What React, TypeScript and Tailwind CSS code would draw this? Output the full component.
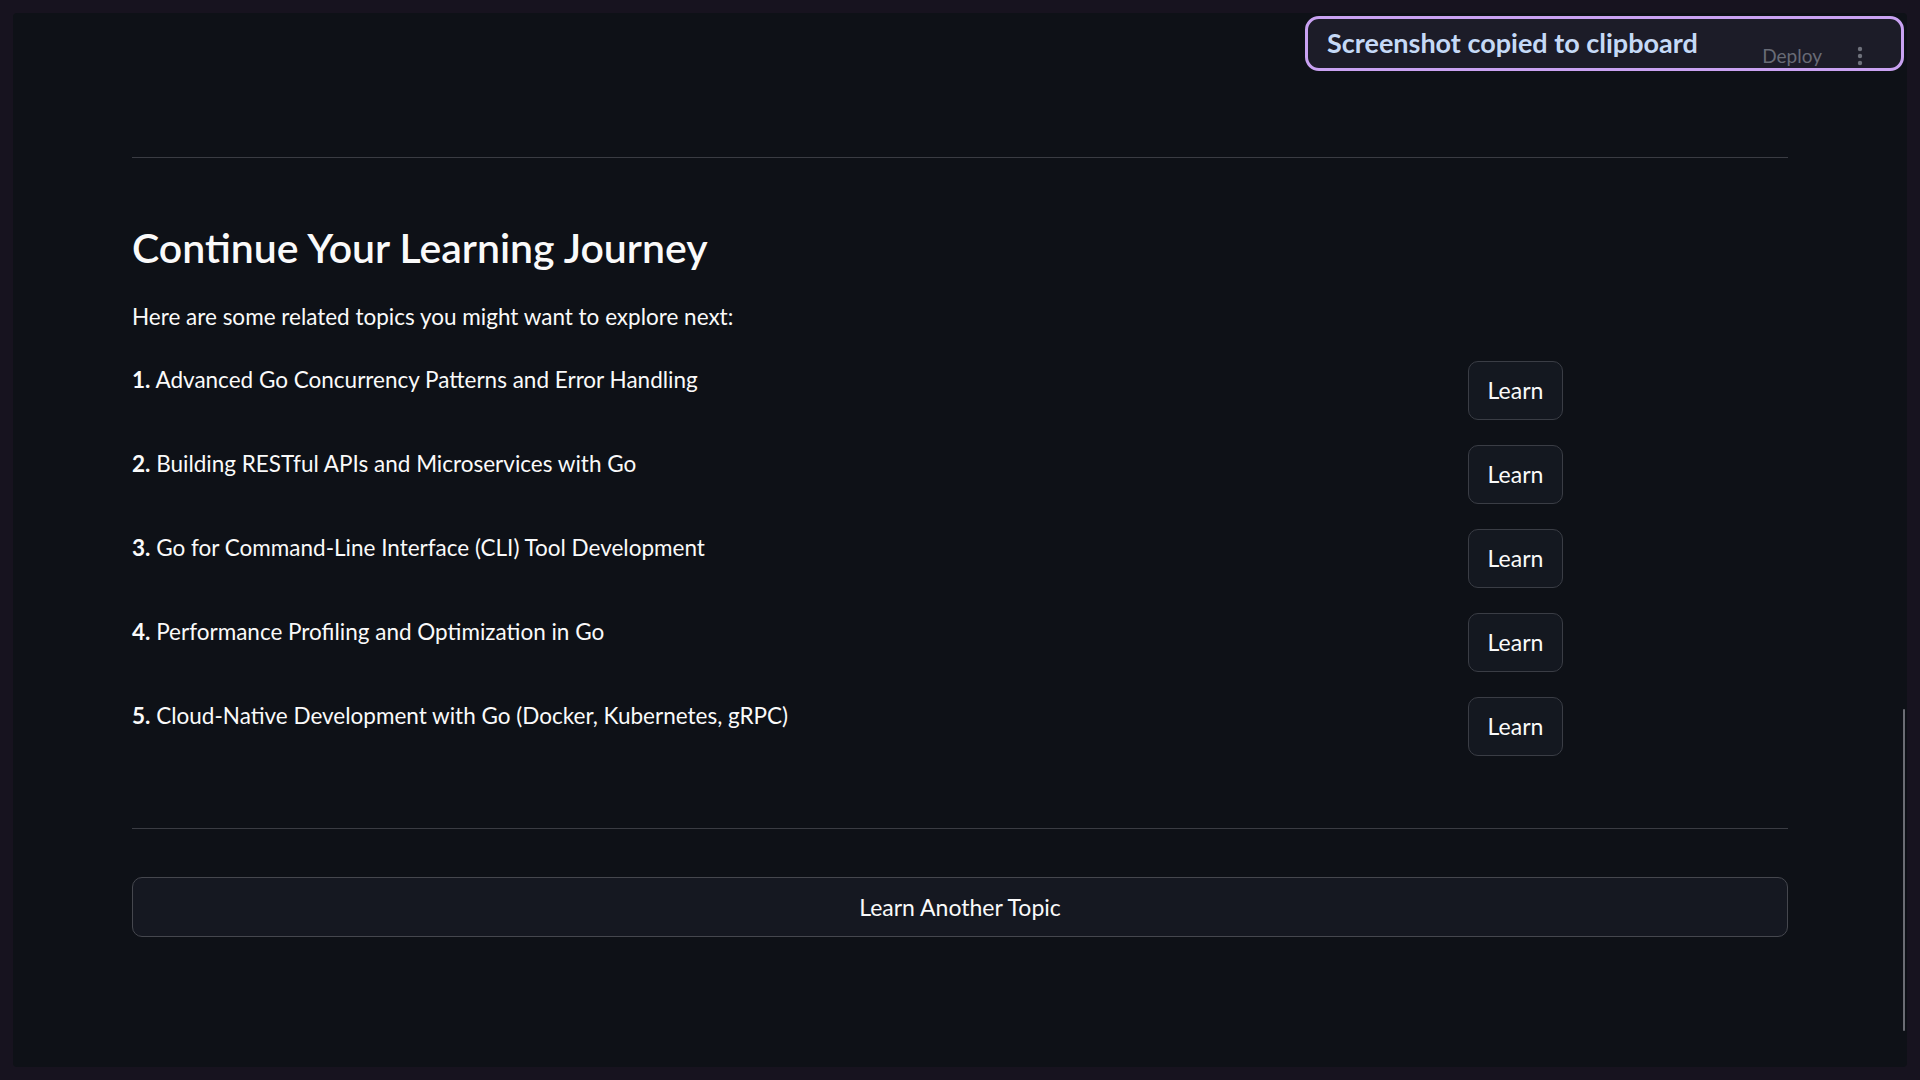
import React from 'react';

const topics = [
  'Advanced Go Concurrency Patterns and Error Handling',
  'Building RESTful APIs and Microservices with Go',
  'Go for Command-Line Interface (CLI) Tool Development',
  'Performance Profiling and Optimization in Go',
  'Cloud-Native Development with Go (Docker, Kubernetes, gRPC)',
];

const font = { fontFamily: 'Lato, "Noto Sans", sans-serif' };

const App: React.FC = () => {
  return (
    <div className="w-[1920px] h-[1080px] bg-[#17131f] pt-[13px] pl-[13px] overflow-hidden relative" style={font}>
      <div className="w-[1894px] h-[1054px] bg-[#0e1117] rounded-[4px] relative text-[#fafafa]">
        <div className="w-[1656px] mx-auto pt-[144px]">
          <div className="h-px bg-[#3a3c43]" />

          <h2 className="mt-[63px] text-[41px] leading-[54px] font-semibold">Continue Your Learning Journey</h2>
          <p className="mt-[26px] text-[22.5px] leading-[32px]">Here are some related topics you might want to explore next:</p>

          <div className="mt-[28px] flex flex-col gap-[26px]">
            {topics.map((t, i) => (
              <div key={t} className="grid grid-cols-[1fr_320px] h-[58px]">
                <div className="pt-[3px] text-[22.5px] leading-[32px]">
                  <span className="font-bold">{i + 1}.</span> {t}
                </div>
                <div>
                  <button
                    type="button"
                    className="w-[95px] h-[59px] rounded-[10px] border border-[#3a3d45] bg-[#141820] text-[23px] text-[#fafafa]"
                  >
                    Learn
                  </button>
                </div>
              </div>
            ))}
          </div>

          <div className="mt-[73px] h-px bg-[#3a3c43]" />

          <button
            type="button"
            className="mt-[48px] w-full h-[60px] rounded-[10px] border border-[#45474e] bg-[#151821] text-[23px] text-[#fafafa]"
          >
            Learn Another Topic
          </button>
        </div>

        {/* scrollbar */}
        <div className="absolute right-[2px] bottom-[36px] w-[2px] h-[322px] bg-[#6b6d74] rounded-full" />
      </div>

      {/* toast */}
      <div className="absolute left-[1305px] top-[16px] w-[599px] h-[55px] rounded-[14px] border-[3px] border-[#c9a2f2] bg-[#1c1c28] flex pl-[19px] pr-[37px]">
        <span className="pt-[6px] text-[27px] leading-[36px] font-bold text-[#c5d9f6] flex-1">
          Screenshot copied to clipboard
        </span>
        <div className="flex items-center gap-[34px] pt-[25px]">
          <span className="text-[19px] leading-[26px] text-[#686b76]">Deploy</span>
          <svg width="8" height="22" viewBox="0 0 8 22">
            <circle cx="4" cy="4" r="2.2" fill="#6e717b" />
            <circle cx="4" cy="11" r="2.2" fill="#6e717b" />
            <circle cx="4" cy="18" r="2.2" fill="#6e717b" />
          </svg>
        </div>
      </div>
    </div>
  );
};

export default App;
